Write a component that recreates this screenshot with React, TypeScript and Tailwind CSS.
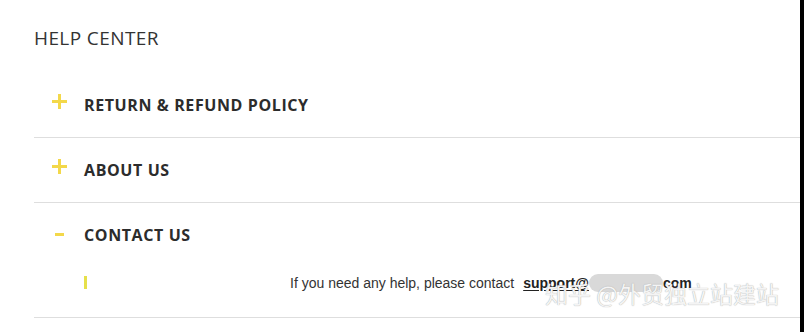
import React from 'react'

const items = [
  { title: 'RETURN & REFUND POLICY', open: false },
  { title: 'ABOUT US', open: false },
  { title: 'CONTACT US', open: true },
]

function Plus() {
  return (
    <span className="relative block h-[15px] w-[15px]">
      <span className="absolute left-0 top-[6px] h-[3px] w-[15px] bg-[#f3d84a]" />
      <span className="absolute left-[6px] top-0 h-[15px] w-[3px] bg-[#f3d84a]" />
    </span>
  )
}

function Minus() {
  return (
    <span className="flex h-[15px] w-[15px] items-center justify-center">
      <span className="h-[3px] w-[9px] bg-[#f3d84a]" />
    </span>
  )
}

export default function App() {
  return (
    <div className="flex h-[332px] w-[804px] bg-white font-['Open_Sans',sans-serif] text-[#333]">
      <div className="flex-1 pl-[34px]">
        <h1 className="pt-[26px] text-[19px] leading-[24px] font-normal tracking-[0.4px]">HELP CENTER</h1>
        <div className="mt-[23px]">
          {items.map((it) => (
            <div key={it.title} className="border-b border-[#dedede]">
              <div className="flex h-[64px] items-center pl-[18px]">
                <span className={it.open ? 'mt-[-2px]' : 'mt-[-8px]'}>
                  {it.open ? <Minus /> : <Plus />}
                </span>
                <span className="ml-[17px] text-[16px] font-bold tracking-[0.6px] text-[#2c2c2c]">{it.title}</span>
              </div>
              {it.open && (
                <div className="flex h-[50px] items-start pl-[50px] pt-[7px]">
                  <span className="mt-[2px] h-[13px] w-[3px] bg-[#e6e04a]" />
                  <div className="relative ml-[203px] flex items-center font-['Liberation_Sans',Arial,sans-serif] text-[14px] leading-[16px] text-[#333]">
                    <span>If you need any help, please contact</span>
                    <span className="ml-[9px] font-bold text-[#222] underline underline-offset-2">support@</span>
                    <span className="h-[18px] w-[74px] rounded-full bg-[#d9d9d9]" />
                    <span className="font-bold text-[#222]">com</span>
                    <span className="absolute left-[255px] top-[4px] whitespace-nowrap font-['Noto_Sans_CJK_SC',sans-serif] text-[23px] leading-[30px] text-[#f4f4f4] [text-shadow:0_0_1px_#999]">
                      知乎 @外贸独立站建站
                    </span>
                  </div>
                </div>
              )}
            </div>
          ))}
        </div>
      </div>
      <div className="w-[4px] bg-black" />
    </div>
  )
}
